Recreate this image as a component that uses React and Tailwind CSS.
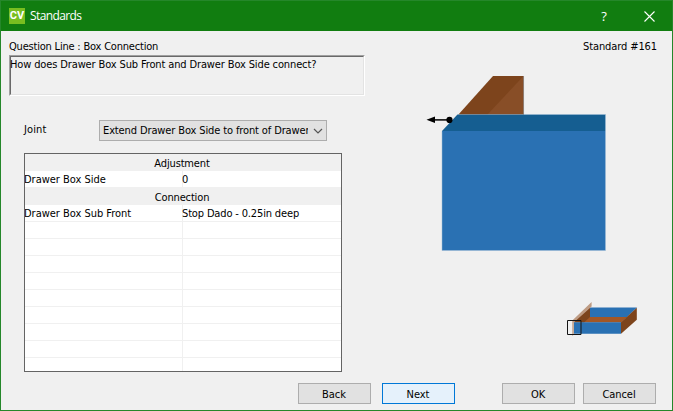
import React from 'react';

const rows = [
  { title: 'Adjustment' },
  { name: 'Drawer Box Side', value: '0' },
  { title: 'Connection' },
  { name: 'Drawer Box Sub Front', value: 'Stop Dado - 0.25in deep' },
  {}, {}, {}, {}, {}, {}, {}, {}, {},
];

function TitleBar() {
  return (
    <header className="flex h-[31px] shrink-0 items-center border-t border-[#25872a] bg-[#117d10] text-white">
      <div className="ml-2 flex h-4 w-4 items-center justify-center bg-[#78be20] font-['Roboto',sans-serif] text-[11px] font-bold leading-4 tracking-normal">CV</div>
      <span className="ml-[5px] font-['Open_Sans',sans-serif] text-[12px] leading-4 tracking-[-0.6px]">Standards</span>
      <span className="ml-auto w-[10px] text-center font-['Open_Sans',sans-serif] text-[13px] font-medium leading-4">?</span>
      <svg className="ml-[35px] mr-[17px]" width="11" height="11" viewBox="0 0 11 11" fill="none" stroke="white" strokeWidth="1.1">
        <path d="M.5.5l10 10M10.5.5l-10 10" />
      </svg>
    </header>
  );
}

function PropertyTable() {
  return (
    <div className="ml-[15px] mt-3 h-[219px] w-[318px] overflow-hidden border border-[#646464] bg-white">
      {rows.map((row, i) =>
        row.title ? (
          <div key={i} className="h-[17px] bg-[#f0f0f0] pr-[2px] text-center leading-[19px]">{row.title}</div>
        ) : (
          <div key={i} className="flex h-[17px] border-b border-[#f0f0f0] leading-[17px]">
            <div className="w-[158px] shrink-0 whitespace-nowrap border-r border-[#f0f0f0] -indent-px tracking-[-0.02px]">{row.name}</div>
            <div className="whitespace-nowrap -indent-px">{row.value}</div>
          </div>
        )
      )}
    </div>
  );
}

function JointDrawing() {
  return (
    <svg className="shrink-0" width="190" height="190" viewBox="420 70 190 190">
      <path d="M493 76h31v39h-66z" fill="#7d441c" />
      <path d="M523.6 76v39h-36.6z" fill="#884e27" />
      <path d="M457.500 114.500h148v16.500h-163.500z" fill="#155e91" />
      <path d="M442 131h163.500v119.500h-163.500z" fill="#2a71b3" />
      <path d="M523.600 76v38M458 114.500h147.500v136h-163.500v-119" fill="none" stroke="#9fbdd7" strokeWidth=".5" />
      <path d="M433 119.900h17" stroke="#000" strokeWidth="1.5" />
      <path d="M426.500 119.800l8.500-3.200v6.400z" />
      <circle cx="449.500" cy="119.900" r="3.100" />
    </svg>
  );
}

function DrawerDrawing() {
  return (
    <svg className="shrink-0" width="80" height="44" viewBox="562 296 80 44">
      <path d="M589.500 307.500h47.500l-11 10.500h-36.500z" fill="#2a71b3" />
      <path d="M588 317h39l-6 5.500h-40z" fill="#a35725" />
      <path d="M590 307.500v9.500l-6 5.500h-10v-2z" fill="#7d441c" />
      <path d="M621 322.300l15.800-14.600v12l-15.800 14z" fill="#7d441c" />
      <path d="M574 322.200h47v11.500h-47z" fill="#2a71b3" />
      <path d="M572.300 320.500l19.300-18.500v4.500l-17.800 16v12l-1.500 1.500z" fill="#be9b83" />
      <path d="M567.500 320.500h13.500v14h-13.500z" fill="none" stroke="#151515" />
    </svg>
  );
}

function Button({ children, primary, className }) {
  return (
    <button className={`flex h-[21px] w-[73px] items-center justify-center border pr-px pt-px leading-[21px] tracking-[-0.05px] ${primary ? 'border-[#0078d7] bg-[#e5f1fb]' : 'border-[#adadad] bg-[#e1e1e1]'} ${className || ''}`}>
      {children}
    </button>
  );
}

export default function App() {
  return (
    <div className="flex h-[411px] w-[673px] flex-col overflow-hidden border-x border-b border-[#25872a] bg-[#f0f0f0] font-['DejaVu_Sans_Condensed','DejaVu_Sans',sans-serif] text-[11px] tracking-[-0.15px] text-black">
      <TitleBar />
      <main className="flex flex-1 pl-2">
        <section className="w-[356px] shrink-0 pt-2">
          <div className="h-4 whitespace-nowrap leading-4 tracking-[-0.2px]">Question Line : Box Connection</div>
          <div className="h-[41px] w-[356px] border border-b-white border-l-[#a0a0a0] border-r-white border-t-[#a0a0a0]">
            <div className="h-full whitespace-nowrap border border-b-[#e3e3e3] border-l-[#696969] border-r-[#e3e3e3] border-t-[#696969] leading-[15px] -indent-px tracking-[-0.13px]">
              How does Drawer Box Sub Front and Drawer Box Side connect?
            </div>
          </div>
          <div className="mt-6 flex h-[21px]">
            <span className="ml-[15px] w-[75px] leading-[19px] tracking-[0.1px]">Joint</span>
            <div className="flex h-[21px] w-[228px] items-center border border-[#adadad] bg-[#e1e1e1] pl-[3px]">
              <span className="w-[205px] overflow-hidden whitespace-nowrap leading-[19px] tracking-[-0.12px]">Extend Drawer Box Side to front of Drawer</span>
              <svg className="ml-[5px]" width="10" height="6" viewBox="0 0 10 6" fill="none" stroke="#555" strokeWidth="1.2"><path d="M1 1l4 4 4-4" /></svg>
            </div>
          </div>
          <PropertyTable />
        </section>
        <aside className="flex flex-1 flex-col pt-2">
          <div className="h-4 pr-[15px] text-right leading-4 tracking-[-0.1px]">Standard #161</div>
          <div className="ml-[55px] mt-[15px] h-[190px]"><JointDrawing /></div>
          <div className="ml-[197px] mt-[36px] h-[44px]"><DrawerDrawing /></div>
        </aside>
      </main>
      <footer className="flex h-[27px] shrink-0 pl-[297px]">
        <Button>Back</Button>
        <Button primary className="ml-[11px]">Next</Button>
        <Button className="ml-[47px]">OK</Button>
        <Button className="ml-2">Cancel</Button>
      </footer>
    </div>
  );
}
